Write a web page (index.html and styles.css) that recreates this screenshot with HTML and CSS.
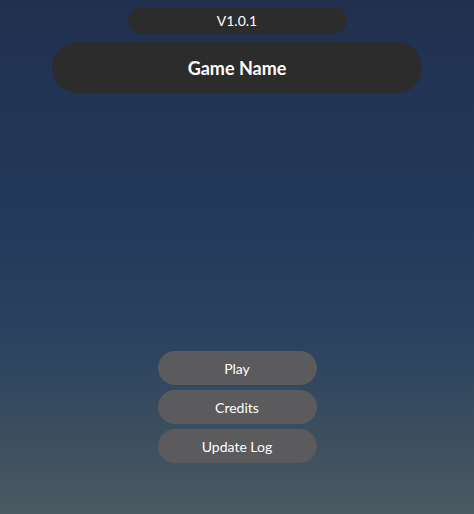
FILE: index.html
```html
<!DOCTYPE html>
<html>
<head>
<meta charset="utf-8">
<link rel="stylesheet" href="styles.css">
</head>
<body>
<div class="screen">
  <div class="header">
    <div class="version">V1.0.1</div>
    <div class="title">Game Name</div>
  </div>
  <div class="menu">
    <div class="btn">Play</div>
    <div class="btn">Credits</div>
    <div class="btn">Update Log</div>
  </div>
</div>
</body>
</html>
```
FILE: styles.css
```css
html, body {
  margin: 0;
  padding: 0;
}
body {
  width: 474px;
  height: 514px;
  overflow: hidden;
  font-family: "Lato", "Open Sans", sans-serif;
  color: #ffffff;
}
.screen {
  width: 474px;
  height: 514px;
  background: linear-gradient(to bottom, #21304f 0%, #233a5c 45%, #2d4560 70%, #3c4f5e 85%, #4b5a63 100%);
  display: flex;
  flex-direction: column;
  align-items: center;
  justify-content: space-between;
  box-sizing: border-box;
  padding: 7px 0 51px;
}
.header {
  display: flex;
  flex-direction: column;
  align-items: center;
  gap: 8px;
}
.version {
  width: 219px;
  height: 27px;
  border-radius: 14px;
  background: #2c2c2d;
  display: flex;
  align-items: center;
  justify-content: center;
  font-size: 14px;
  margin-left: 0;
}
.title {
  width: 370px;
  height: 51px;
  border-radius: 26px;
  background: #2c2c2d;
  display: flex;
  align-items: center;
  justify-content: center;
  font-size: 18px;
  font-weight: 700;
}
.menu {
  display: flex;
  flex-direction: column;
  gap: 5px;
}
.btn {
  width: 159px;
  height: 34px;
  border-radius: 17px;
  background: #5b5a5c;
  display: flex;
  align-items: center;
  justify-content: center;
  font-size: 14px;
}
```
